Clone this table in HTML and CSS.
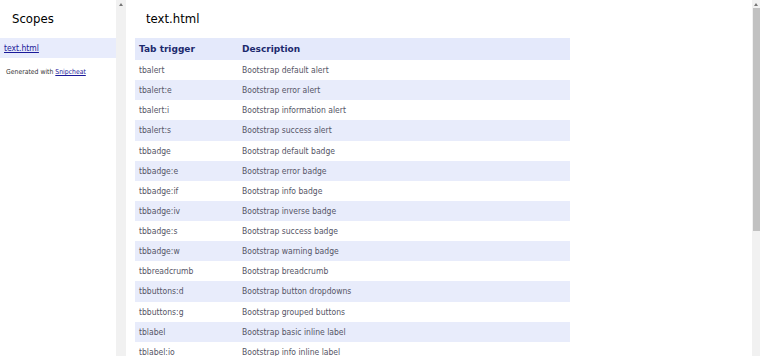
FILE: index.html
```html
<!DOCTYPE html>
<html>
<head>
<meta charset="utf-8">
<link rel="stylesheet" href="styles.css">
</head>
<body>
<div class="app">
  <aside class="sidebar">
    <h2 class="side-title">Scopes</h2>
    <div class="scope-item"><a href="#">text.html</a></div>
    <p class="credit">Generated with <a href="#">Snipcheat</a></p>
  </aside>
  <div class="gutter"><span class="arrow"></span></div>
  <main class="main">
    <h1 class="title">text.html</h1>
    <table class="snips">
      <thead>
        <tr><th>Tab trigger</th><th>Description</th></tr>
      </thead>
      <tbody>
        <tr><td>tbalert</td><td>Bootstrap default alert</td></tr>
        <tr><td>tbalert:e</td><td>Bootstrap error alert</td></tr>
        <tr><td>tbalert:i</td><td>Bootstrap information alert</td></tr>
        <tr><td>tbalert:s</td><td>Bootstrap success alert</td></tr>
        <tr><td>tbbadge</td><td>Bootstrap default badge</td></tr>
        <tr><td>tbbadge:e</td><td>Bootstrap error badge</td></tr>
        <tr><td>tbbadge:if</td><td>Bootstrap info badge</td></tr>
        <tr><td>tbbadge:iv</td><td>Bootstrap inverse badge</td></tr>
        <tr><td>tbbadge:s</td><td>Bootstrap success badge</td></tr>
        <tr><td>tbbadge:w</td><td>Bootstrap warning badge</td></tr>
        <tr><td>tbbreadcrumb</td><td>Bootstrap breadcrumb</td></tr>
        <tr><td>tbbuttons:d</td><td>Bootstrap button dropdowns</td></tr>
        <tr><td>tbbuttons:g</td><td>Bootstrap grouped buttons</td></tr>
        <tr><td>tblabel</td><td>Bootstrap basic inline label</td></tr>
        <tr><td>tblabel:io</td><td>Bootstrap info inline label</td></tr>
      </tbody>
    </table>
  </main>
  <div class="scrollbar"><span class="arrow"></span><div class="thumb"></div></div>
</div>
</body>
</html>
```
FILE: styles.css
```css
html, body {
  margin: 0;
  padding: 0;
  height: 100%;
  overflow: hidden;
  background: #fff;
  font-family: "DejaVu Sans Condensed", "DejaVu Sans", sans-serif;
}
.app {
  display: flex;
  height: 356px;
  overflow: hidden;
}
.sidebar {
  width: 116px;
  flex: none;
}
.side-title {
  margin: 0;
  padding: 11px 0 0 12px;
  height: 27px;
  box-sizing: border-box;
  font-size: 13px;
  font-weight: normal;
  color: #000;
}
.scope-item {
  background: #e8ecfc;
  height: 20px;
  line-height: 20px;
  padding-left: 4px;
  margin-top: 11px;
  font-size: 8.5px;
}
.scope-item a {
  color: #1a1a9a;
}
.credit {
  margin: 10px 0 0 6px;
  font-size: 6.8px;
  color: #333;
}
.credit a {
  color: #1a1a9a;
}
.gutter {
  width: 10px;
  flex: none;
  background: #f1f1f1;
  position: relative;
}
.arrow {
  position: absolute;
  top: 3px;
  left: 50%;
  margin-left: -2px;
  width: 0;
  height: 0;
  border-left: 2px solid transparent;
  border-right: 2px solid transparent;
  border-bottom: 3px solid #777;
}
.main {
  flex: 1;
  padding: 0 0 0 9px;
}
.title {
  margin: 0;
  padding: 11px 0 0 11px;
  height: 38px;
  box-sizing: border-box;
  font-size: 13px;
  font-weight: normal;
  color: #000;
}
.snips {
  width: 435px;
  border-collapse: collapse;
  font-size: 8.5px;
}
.snips th, .snips td {
  text-align: left;
  padding: 0 4px;
}
.snips thead tr {
  height: 22px;
}
.snips tbody tr {
  height: 20.13px;
}
.snips th {
  background: #e4e9fb;
  color: #1c2a6e;
  font-weight: bold;
  font-family: "DejaVu Sans", sans-serif;
  font-size: 9px;
}
.snips td:first-child, .snips th:first-child {
  width: 95px;
}
.snips td {
  color: #555566;
}
.snips tbody tr:nth-child(even) td {
  background: #e8ecfb;
}
.scrollbar {
  width: 8px;
  flex: none;
  background: #f1f1f1;
  position: relative;
}
.thumb {
  position: absolute;
  top: 8px;
  left: 1px;
  right: 0;
  height: 223px;
  background: #c1c1c1;
}
```
